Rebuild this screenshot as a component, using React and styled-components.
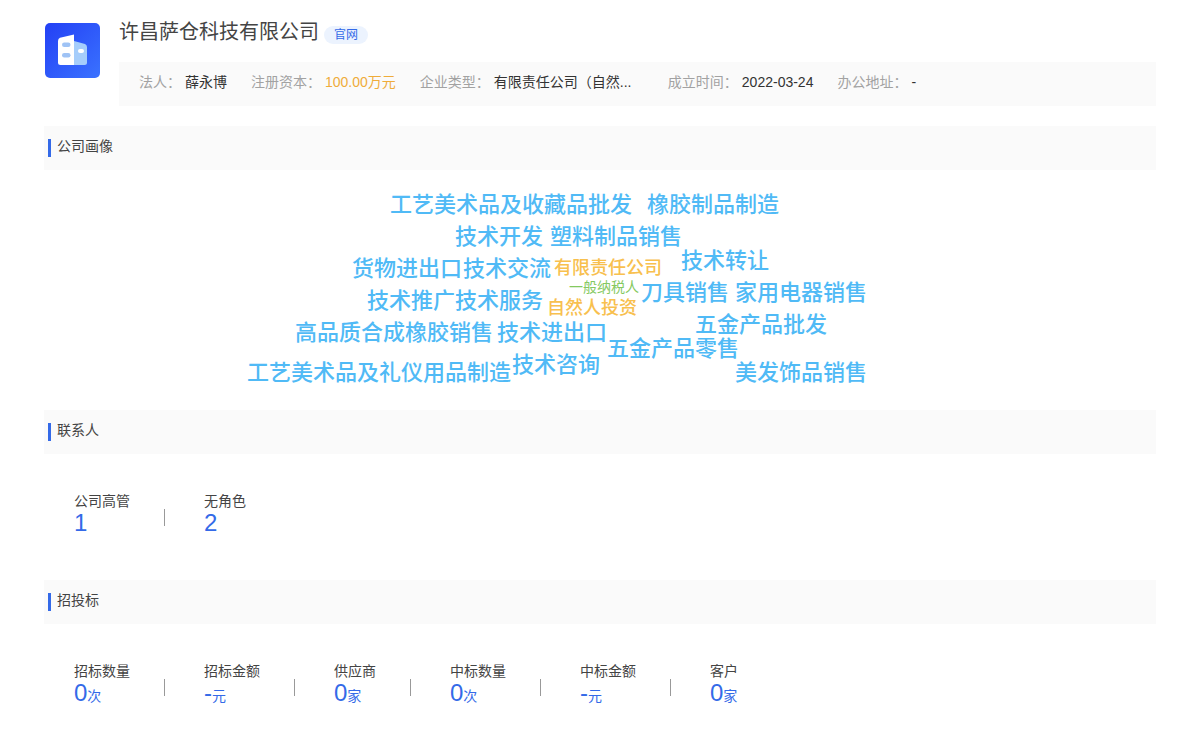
import React from 'react'
import styled, { createGlobalStyle } from 'styled-components'

const GlobalStyle = createGlobalStyle`
    * {
        box-sizing: border-box;
    }
    body {
        margin: 0;
        background-color: #fff;
        color: #444;
        font-family: "Liberation Sans", "Noto Sans CJK SC", sans-serif;
        font-size: 14px;
        line-height: 20px;
    }
`

const Container = styled.main`
    padding: 18px 44px 0;
`
const Header = styled.header`
    display: flex;
    gap: 19px;
    margin-bottom: 20px;
`
const Logo = styled.svg`
    flex: none;
    width: 56px;
    height: 56px;
    margin-top: 4px;
`
const Summary = styled.div`
    flex: 1;
    min-width: 0;
`
const TitleRow = styled.div`
    display: flex;
    align-items: flex-end;
    gap: 5px;
    height: 26px;
    margin-bottom: 18px;
`
const Title = styled.h1`
    margin: 0;
    font-size: 20px;
    line-height: 24px;
    font-weight: 400;
`
const SiteLink = styled.a`
    padding: 0 10px;
    border-radius: 9px;
    background-color: #ecf3fe;
    color: #346ae8;
    font-size: 12px;
    line-height: 18px;
    text-decoration: none;
`
const InfoBar = styled.dl`
    display: flex;
    gap: 24px;
    margin: 0;
    padding: 10px 20px 14px;
    background-color: #fafafa;
`
const InfoItem = styled.div`
    display: flex;
    gap: 4px;
    white-space: nowrap;
`
const InfoLabel = styled.dt`
    color: #a2a2a2;
`
const InfoValue = styled.dd`
    margin: 0;
    min-width: ${ props => props.$wide ? "150px" : "0" };
    color: ${ props => props.$highlight ? "#efac3a" : "#333" };
`

const SectionHead = styled.div`
    display: flex;
    align-items: flex-start;
    gap: 6px;
    height: 44px;
    padding: 10px 4px;
    background-color: #fafafa;
`
const Marker = styled.span`
    width: 3px;
    height: 18px;
    margin-top: 3px;
    background-color: #346ae8;
`
const SectionTitle = styled.h2`
    margin: 0;
    font-size: 14px;
    line-height: 20px;
    font-weight: 400;
`
const Cloud = styled.div`
    position: relative;
    height: 240px;
`
const Word = styled.span`
    position: absolute;
    left: ${ props => props.$x }px;
    top: ${ props => props.$y }px;
    font-size: ${ props => props.$size }px;
    line-height: ${ props => props.$size + 10 }px;
    font-weight: ${ props => props.$size > 14 ? 500 : 400 };
    color: ${ props => props.$color };
    white-space: nowrap;
`
const Stats = styled.div`
    display: flex;
    align-items: flex-start;
    padding: 37px 30px 45px;
`
const Stat = styled.div`
    & + & {
        position: relative;
        margin-left: 74px;
    }
    & + &::before {
        content: "";
        position: absolute;
        left: -40px;
        top: 18px;
        width: 1px;
        height: 17px;
        background-color: #999;
    }
`
const StatLabel = styled.div`
    line-height: 20px;
`
const StatValue = styled.div`
    font-size: 24px;
    line-height: 24px;
    color: #346ae8;
`
const Unit = styled.span`
    font-size: 14px;
`

const BLUE = "#50baf6"
const YELLOW = "#f8c04e"
const GREEN = "#85c95f"

const info = [
    { label: "法人", value: "薛永博" },
    { label: "注册资本", value: "100.00万元", highlight: true },
    { label: "企业类型", value: "有限责任公司（自然...", wide: true },
    { label: "成立时间", value: "2022-03-24" },
    { label: "办公地址", value: "-" },
]

// x / y are measured from the top left of the cloud
const words = [
    { text: "工艺美术品及收藏品批发", x: 346, y: 19 },
    { text: "橡胶制品制造", x: 603, y: 19 },
    { text: "技术开发", x: 411, y: 51 },
    { text: "塑料制品销售", x: 506, y: 51 },
    { text: "货物进出口", x: 308, y: 83 },
    { text: "技术交流", x: 419, y: 83 },
    { text: "有限责任公司", x: 510, y: 84, size: 18, color: YELLOW },
    { text: "技术转让", x: 637, y: 75 },
    { text: "一般纳税人", x: 525, y: 105, size: 14, color: GREEN },
    { text: "刀具销售", x: 597, y: 107 },
    { text: "家用电器销售", x: 691, y: 107 },
    { text: "技术推广", x: 323, y: 115 },
    { text: "技术服务", x: 411, y: 115 },
    { text: "自然人投资", x: 503, y: 124, size: 18, color: YELLOW },
    { text: "高品质合成橡胶销售", x: 251, y: 147 },
    { text: "技术进出口", x: 453, y: 147 },
    { text: "五金产品批发", x: 651, y: 139 },
    { text: "五金产品零售", x: 563, y: 163 },
    { text: "工艺美术品及礼仪用品制造", x: 203, y: 187 },
    { text: "技术咨询", x: 468, y: 179 },
    { text: "美发饰品销售", x: 691, y: 187 },
]

const contacts = [
    { label: "公司高管", value: 1 },
    { label: "无角色", value: 2 },
]

const bids = [
    { label: "招标数量", value: 0, unit: "次" },
    { label: "招标金额", value: "-", unit: "元" },
    { label: "供应商", value: 0, unit: "家" },
    { label: "中标数量", value: 0, unit: "次" },
    { label: "中标金额", value: "-", unit: "元" },
    { label: "客户", value: 0, unit: "家" },
]

const CompanyLogo = () => (
    <Logo viewBox="0 0 56 56" aria-hidden="true">
        <defs>
            <linearGradient id="logoBg" x1="0" y1="0" x2="1" y2="1">
                <stop offset="0" stopColor="#2340f5" />
                <stop offset="1" stopColor="#3a72ff" />
            </linearGradient>
        </defs>
        <rect x="1" y="1" width="55" height="55" rx="5" fill="url(#logoBg)" />
        <path d="M30 19L41 22Q43 22.800 43 25V40.500Q43 43 40.500 43H30Z" fill="#a5cdfb" />
        <path d="M16 15.800Q14 16.500 14 19V40.500Q14 43 16.500 43H30V12.500Z" fill="#fff" />
        <rect x="18" y="20.500" width="8.500" height="4.500" rx="2.200" fill="#9fc3f5" />
        <rect x="18" y="31" width="8.500" height="4.500" rx="2.200" fill="#9fc3f5" />
        <rect x="34" y="27" width="6" height="4" rx="2" fill="#fff" />
    </Logo>
)

const Section = ({ title, children }) => (
    <section>
        <SectionHead>
            <Marker />
            <SectionTitle>{ title }</SectionTitle>
        </SectionHead>
        { children }
    </section>
)

const StatList = ({ items }) => (
    <Stats>
        { items.map( (item) => (
            <Stat key={ item.label }>
                <StatLabel>{ item.label }</StatLabel>
                <StatValue>{ item.value }{ item.unit && <Unit>{ item.unit }</Unit> }</StatValue>
            </Stat>
        ))}
    </Stats>
)

const App = () => {
    return (
        <Container lang="zh-CN">
            <GlobalStyle />
            <Header>
                <CompanyLogo />
                <Summary>
                    <TitleRow>
                        <Title>许昌萨仓科技有限公司</Title>
                        <SiteLink href="#">官网</SiteLink>
                    </TitleRow>
                    <InfoBar>
                        { info.map( (item) => (
                            <InfoItem key={ item.label }>
                                <InfoLabel>{ item.label }：</InfoLabel>
                                <InfoValue $wide={ item.wide } $highlight={ item.highlight }>{ item.value }</InfoValue>
                            </InfoItem>
                        ))}
                    </InfoBar>
                </Summary>
            </Header>
            <Section title="公司画像">
                <Cloud>
                    { words.map( (word) => (
                        <Word
                            key={ word.text }
                            $x={ word.x }
                            $y={ word.y }
                            $size={ word.size || 22 }
                            $color={ word.color || BLUE }
                        >
                            { word.text }
                        </Word>
                    ))}
                </Cloud>
            </Section>
            <Section title="联系人">
                <StatList items={ contacts } />
            </Section>
            <Section title="招投标">
                <StatList items={ bids } />
            </Section>
        </Container>
    )
}

export default App
